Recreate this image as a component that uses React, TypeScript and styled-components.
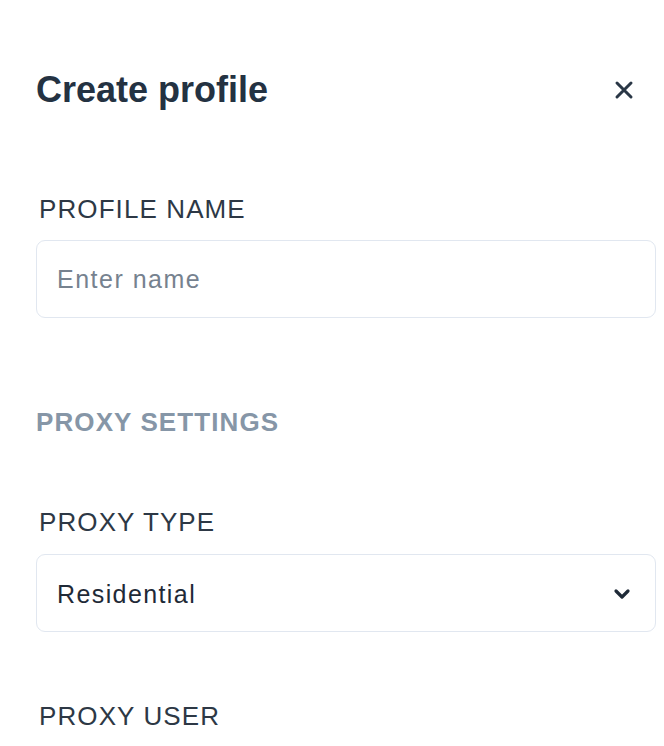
import styled, { createGlobalStyle } from 'styled-components';

const GlobalStyle = createGlobalStyle`
    html, body {
        margin: 0;
        padding: 0;
        background: #ffffff;
    }
    body {
        font-family: 'Liberation Sans', Arial, Helvetica, sans-serif;
        -webkit-font-smoothing: antialiased;
    }
`;

const StyledPanel = styled.div`
    display: flex;
    flex-direction: column;
    padding: 72px 8px 0 36px;
    width: 664px;
    box-sizing: border-box;
`;

const StyledHeader = styled.div`
    display: flex;
    align-items: center;
    justify-content: space-between;
    height: 36px;
    margin-bottom: 87px;
`;

const StyledTitle = styled.h1`
    margin: 0;
    font-size: 36px;
    line-height: 36px;
    font-weight: 700;
    color: #243242;
    letter-spacing: 0;
`;

const CloseButton = styled.button`
    display: flex;
    align-items: center;
    justify-content: center;
    width: 36px;
    height: 36px;
    margin-right: 14px;
    padding: 0;
    border: 0;
    background: transparent;
    color: #2a3746;
    cursor: pointer;
`;

const StyledField = styled.div<{ $top?: number }>`
    display: flex;
    flex-direction: column;
    gap: 17px;
    margin-top: ${(p) => p.$top || 0}px;
`;

const StyledLabel = styled.label`
    margin-left: 3px;
    font-size: 26px;
    line-height: 28px;
    color: #2d3845;
    letter-spacing: 1.1px;
`;

const StyledSection = styled.h2<{ $top?: number }>`
    margin: ${(p) => p.$top || 0}px 0 0;
    font-size: 26px;
    line-height: 28px;
    font-weight: 700;
    color: #8696a7;
    letter-spacing: 1.1px;
`;

const StyledInput = styled.input`
    height: 78px;
    box-sizing: border-box;
    border: 1.5px solid #e1e7f0;
    border-radius: 9px;
    padding: 0 20px;
    font-family: inherit;
    font-size: 25px;
    letter-spacing: 1.5px;
    color: #1f2a37;
    outline: none;
    &::placeholder {
        color: #76828f;
    }
`;

const SelectBox = styled.div`
    display: flex;
    align-items: center;
    justify-content: space-between;
    height: 78px;
    margin-top: 1px;
    box-sizing: border-box;
    border: 1.5px solid #e1e7f0;
    border-radius: 9px;
    padding: 2px 24px 0 20px;
    font-size: 25px;
    letter-spacing: 1.4px;
    color: #1f2a37;
    cursor: pointer;
`;

const App = () => {
    return (
        <>
            <GlobalStyle />
            <StyledPanel>
                <StyledHeader>
                    <StyledTitle>Create profile</StyledTitle>
                    <CloseButton aria-label='Close'>
                        <svg width='20' height='20' viewBox='0 0 20 20'>
                            <path d='M3 3 L17 17 M17 3 L3 17' stroke='currentColor' strokeWidth='3' strokeLinecap='round' />
                        </svg>
                    </CloseButton>
                </StyledHeader>
                <StyledField>
                    <StyledLabel>PROFILE NAME</StyledLabel>
                    <StyledInput placeholder='Enter name' />
                </StyledField>
                <StyledSection $top={90}>PROXY SETTINGS</StyledSection>
                <StyledField $top={72}>
                    <StyledLabel>PROXY TYPE</StyledLabel>
                    <SelectBox>
                        <span>Residential</span>
                        <svg width='18' height='12' viewBox='0 0 18 12'>
                            <path d='M3 3 L9 9 L15 3' fill='none' stroke='#1f2a37' strokeWidth='3.2' strokeLinecap='round' strokeLinejoin='round' />
                        </svg>
                    </SelectBox>
                </StyledField>
                <StyledField $top={70}>
                    <StyledLabel>PROXY USER</StyledLabel>
                </StyledField>
            </StyledPanel>
        </>
    );
};

export default App;
